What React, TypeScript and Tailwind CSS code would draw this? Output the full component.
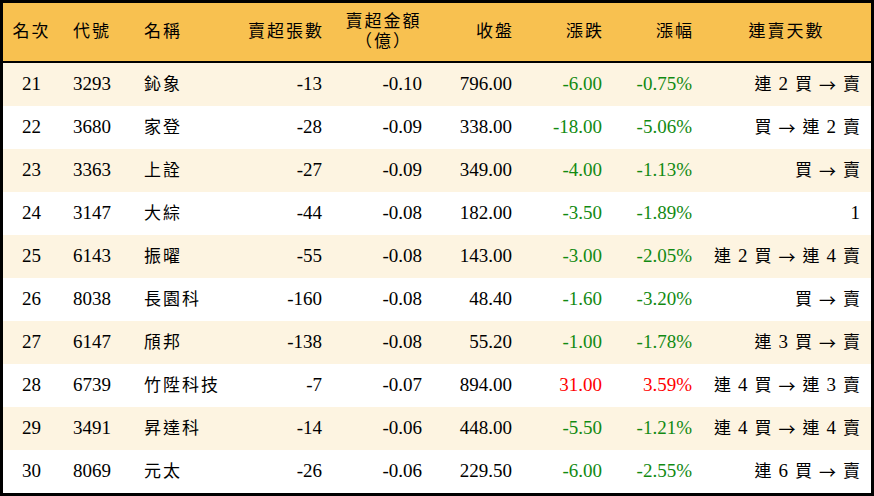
import React from 'react';

type Row = {
  rank: number;
  code: string;
  name: string;
  lots: string;
  amount: string;
  close: string;
  change: string;
  pct: string;
  streak: string;
};

const rows: Row[] = [
  { rank: 21, code: '3293', name: '鈊象', lots: '-13', amount: '-0.10', close: '796.00', change: '-6.00', pct: '-0.75%', streak: '連 2 買 → 賣' },
  { rank: 22, code: '3680', name: '家登', lots: '-28', amount: '-0.09', close: '338.00', change: '-18.00', pct: '-5.06%', streak: '買 → 連 2 賣' },
  { rank: 23, code: '3363', name: '上詮', lots: '-27', amount: '-0.09', close: '349.00', change: '-4.00', pct: '-1.13%', streak: '買 → 賣' },
  { rank: 24, code: '3147', name: '大綜', lots: '-44', amount: '-0.08', close: '182.00', change: '-3.50', pct: '-1.89%', streak: '1' },
  { rank: 25, code: '6143', name: '振曜', lots: '-55', amount: '-0.08', close: '143.00', change: '-3.00', pct: '-2.05%', streak: '連 2 買 → 連 4 賣' },
  { rank: 26, code: '8038', name: '長園科', lots: '-160', amount: '-0.08', close: '48.40', change: '-1.60', pct: '-3.20%', streak: '買 → 賣' },
  { rank: 27, code: '6147', name: '頎邦', lots: '-138', amount: '-0.08', close: '55.20', change: '-1.00', pct: '-1.78%', streak: '連 3 買 → 賣' },
  { rank: 28, code: '6739', name: '竹陞科技', lots: '-7', amount: '-0.07', close: '894.00', change: '31.00', pct: '3.59%', streak: '連 4 買 → 連 3 賣' },
  { rank: 29, code: '3491', name: '昇達科', lots: '-14', amount: '-0.06', close: '448.00', change: '-5.50', pct: '-1.21%', streak: '連 4 買 → 連 4 賣' },
  { rank: 30, code: '8069', name: '元太', lots: '-26', amount: '-0.06', close: '229.50', change: '-6.00', pct: '-2.55%', streak: '連 6 買 → 賣' },
];

const cols = 'grid grid-cols-[57px_71px_100px_101px_100px_90px_90px_90px_169px]';

function Streak({ text }: { text: string }) {
  return (
    <div className="flex justify-end items-center gap-[7px] pr-[11px] whitespace-nowrap">
      {text.split(' ').map((t, i) =>
        /\d/.test(t) ? (
          <span key={i} className="text-[19px]">{t}</span>
        ) : t === '→' ? (
          <span key={i} className="text-[17px] font-['Noto_Sans_CJK_TC']">{t}</span>
        ) : (
          <span key={i} className="text-[17px]">{t}</span>
        )
      )}
    </div>
  );
}

export default function App() {
  return (
    <div
      className="w-[874px] h-[496px] border-[3px] border-black bg-white text-black overflow-hidden"
      style={{ fontFamily: '"Liberation Serif", "Noto Sans CJK TC", serif' }}
    >
      {/* Header */}
      <div className={`${cols} h-[60px] bg-[#f8c150] border-b-2 border-black items-center text-[17px] tracking-[2px]`}>
        <div className="text-center">名次</div>
        <div className="pl-[13px]">代號</div>
        <div className="pl-[13px]">名稱</div>
        <div className="text-right pr-[8px]">賣超張數</div>
        <div className="flex flex-col items-center leading-[20px] pl-[3px]">
          <span>賣超金額</span>
          <span>（億）</span>
        </div>
        <div className="text-right pr-[8px]">收盤</div>
        <div className="text-right pr-[8px]">漲跌</div>
        <div className="text-right pr-[8px]">漲幅</div>
        <div className="text-center">連賣天數</div>
      </div>

      {/* Rows */}
      {rows.map((r, i) => {
        const up = !r.change.startsWith('-');
        const color = up ? 'text-[#ff0000]' : 'text-[#128a12]';
        return (
          <div
            key={r.rank}
            className={`${cols} h-[43px] items-center text-[19px] ${i % 2 === 0 ? 'bg-[#fdf4e1]' : 'bg-white'}`}
          >
            <div className="text-center">{r.rank}</div>
            <div className="pl-[13px]">{r.code}</div>
            <div className="pl-[13px] text-[17px] tracking-[2px]">{r.name}</div>
            <div className="text-right pr-[10px]">{r.lots}</div>
            <div className="text-right pr-[10px]">{r.amount}</div>
            <div className="text-right pr-[10px]">{r.close}</div>
            <div className={`text-right pr-[10px] ${color}`}>{r.change}</div>
            <div className={`text-right pr-[10px] ${color}`}>{r.pct}</div>
            <Streak text={r.streak} />
          </div>
        );
      })}
    </div>
  );
}
